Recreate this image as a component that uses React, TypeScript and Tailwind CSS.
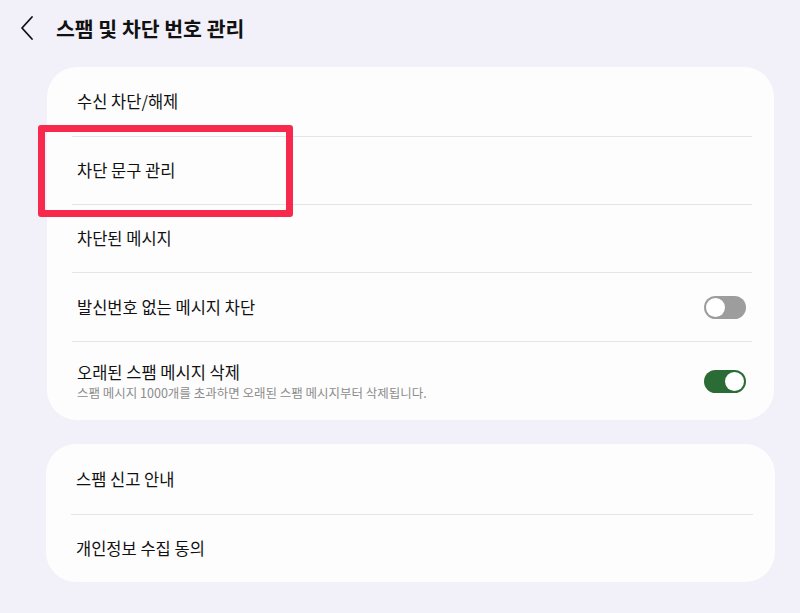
import React from "react";

const font = { fontFamily: '"Noto Sans CJK KR", "Noto Sans", sans-serif' };

function Toggle({ on }: { on: boolean }) {
  return (
    <div
      className={`flex h-[23px] w-[42px] shrink-0 items-center rounded-full px-[2px] ${
        on ? "justify-end bg-[#2b6b36]" : "justify-start bg-[#9d9d9d]"
      }`}
    >
      <div className="h-[19px] w-[19px] rounded-full bg-white" />
    </div>
  );
}

function Divider() {
  return <div className="ml-[25px] mr-[22px] h-px bg-[#e6e5ea]" />;
}

function Row({ label, h, toggle }: { label: string; h: string; toggle?: boolean }) {
  return (
    <div className={`flex items-center pl-[30px] pr-[28px] ${h}`}>
      <span className="flex-1 text-[16.5px] text-[#111]">{label}</span>
      {toggle !== undefined && <Toggle on={toggle} />}
    </div>
  );
}

export default function App() {
  return (
    <div className="relative h-[613px] w-[800px] overflow-hidden bg-[#f2f0f8]" style={font}>
      <div className="flex h-[56px] items-center">
        <svg className="ml-[19px]" width="16" height="26" viewBox="0 0 16 26" fill="none">
          <path d="M13 2 L3 13 L13 24" stroke="#111" strokeWidth="1.8" strokeLinecap="round" strokeLinejoin="round" />
        </svg>
        <span className="ml-[21px] text-[20.5px] font-bold text-[#111]">스팸 및 차단 번호 관리</span>
      </div>

      <div className="ml-[47px] mr-[26px] mt-[11px] rounded-[30px] bg-[#fdfdfe]">
        <Row label="수신 차단/해제" h="h-[69px]" />
        <Divider />
        <Row label="차단 문구 관리" h="h-[67px]" />
        <Divider />
        <Row label="차단된 메시지" h="h-[67px]" />
        <Divider />
        <Row label="발신번호 없는 메시지 차단" h="h-[68px]" toggle={false} />
        <Divider />
        <div className="flex h-[78px] items-center pl-[30px] pr-[28px]">
          <div className="flex flex-1 flex-col">
            <span className="text-[16.5px] leading-[22px] text-[#111]">오래된 스팸 메시지 삭제</span>
            <span className="mt-[1px] text-[12.5px] leading-[17px] text-[#8c8c8c]">
              스팸 메시지 1000개를 초과하면 오래된 스팸 메시지부터 삭제됩니다.
            </span>
          </div>
          <Toggle on={true} />
        </div>
      </div>

      <div className="ml-[46px] mr-[25px] mt-[24px] rounded-[30px] bg-[#fdfdfe]">
        <Row label="스팸 신고 안내" h="h-[70px]" />
        <Divider />
        <Row label="개인정보 수집 동의" h="h-[67px]" />
      </div>

      <div className="absolute left-[38px] top-[125px] h-[92px] w-[255px] rounded-[3px] border-[7px] border-[#f72a4e]" />
    </div>
  );
}
